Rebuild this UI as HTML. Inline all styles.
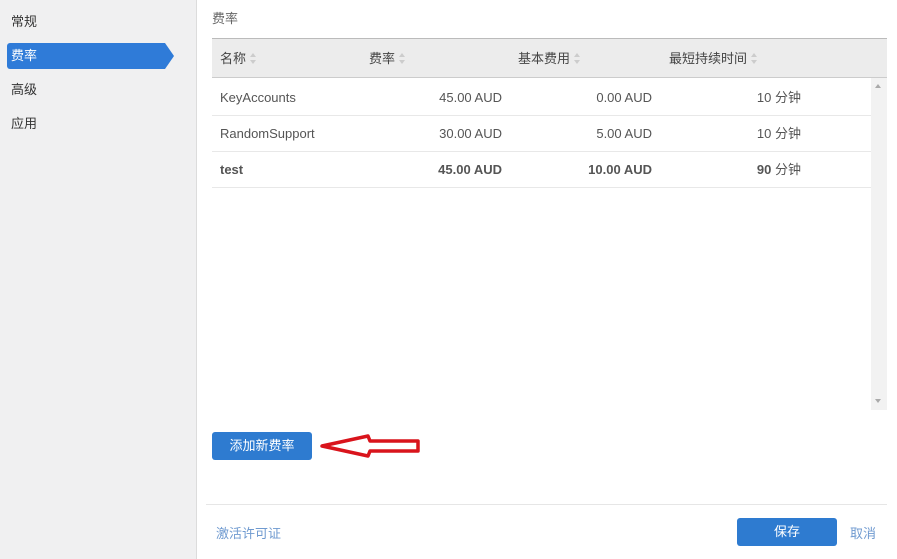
<!DOCTYPE html>
<html><head><meta charset="utf-8"><style>
*{margin:0;padding:0;box-sizing:border-box}
body{width:897px;height:559px;overflow:hidden;background:#fff;font-family:"Liberation Sans","Noto Sans CJK SC",sans-serif;font-size:13px;line-height:16px;color:#555;position:relative}
.side{position:absolute;left:0;top:0;width:197px;height:559px;background:#f0f0f1;border-right:1px solid #dcdcdc}
.nav{position:absolute;left:11px;font-size:13px;color:#333}
.act{position:absolute;left:7px;top:43px;width:158px;height:26px;background:#2f7bd8;border-radius:3px 0 0 3px;color:#fff;padding:5px 0 0 4px}
.act:after{content:"";position:absolute;right:-9px;top:0;border-left:9px solid #2f7bd8;border-top:13px solid transparent;border-bottom:13px solid transparent}
.abs{position:absolute}
.hdr{left:212px;top:38px;width:675px;height:40px;background:#ececec;border-top:1px solid #bbb;border-bottom:1px solid #ccc}
.hdr>div{position:absolute;top:12px;color:#444;display:flex;align-items:center}
.s{display:inline-block;margin-left:4px;width:6px;height:12px;position:relative}
.s:before{content:"";position:absolute;left:0;top:0;border-left:3px solid transparent;border-right:3px solid transparent;border-bottom:4px solid #ccc}
.s:after{content:"";position:absolute;left:0;top:7px;border-left:3px solid transparent;border-right:3px solid transparent;border-top:4px solid #ccc}
.row{left:212px;width:659px;border-bottom:1px solid #e8e8e8;height:36px}
.row>div{position:absolute;top:10px;color:#555}
.btn{background:#2e7bd0;color:#fff;border-radius:3px;display:flex;align-items:center;justify-content:center;font-size:13px}
</style></head><body>
<div class="side">
<div class="nav" style="top:14px">常规</div>
<div class="act">费率</div>
<div class="nav" style="top:82px">高级</div>
<div class="nav" style="top:116px">应用</div>
</div>
<div class="abs" style="left:212px;top:11px;color:#666">费率</div>
<div class="abs hdr">
<div style="left:8px">名称<span class="s"></span></div>
<div style="left:157px">费率<span class="s"></span></div>
<div style="left:306px">基本费用<span class="s"></span></div>
<div style="left:457px">最短持续时间<span class="s"></span></div>
</div>
<div class="abs" style="left:871px;top:78px;width:16px;height:332px;background:#f2f2f2"></div>
<div class="abs" style="left:875px;top:84px;border-left:3px solid transparent;border-right:3px solid transparent;border-bottom:4px solid #aaa"></div>
<div class="abs" style="left:875px;top:399px;border-left:3px solid transparent;border-right:3px solid transparent;border-top:4px solid #aaa"></div>
<div class="abs row" style="top:80px"><div style="left:8px">KeyAccounts</div><div style="right:369px">45.00 AUD</div><div style="right:219px">0.00 AUD</div><div style="right:70px">10 分钟</div></div>
<div class="abs row" style="top:116px"><div style="left:8px">RandomSupport</div><div style="right:369px">30.00 AUD</div><div style="right:219px">5.00 AUD</div><div style="right:70px">10 分钟</div></div>
<div class="abs row" style="top:152px"><div style="left:8px;font-weight:bold">test</div><div style="right:369px;font-weight:bold">45.00 AUD</div><div style="right:219px;font-weight:bold">10.00 AUD</div><div style="right:70px"><b>90</b> 分钟</div></div>
<div class="abs btn" style="left:212px;top:432px;width:100px;height:28px">添加新费率</div>
<svg class="abs" style="left:318px;top:432px" width="106" height="28"><path d="M4 14 L50 4 L52 9 L100 9 L100 19 L52 19 L50 24 Z" fill="none" stroke="#d9141c" stroke-width="3.5" stroke-linejoin="round"/></svg>
<div class="abs" style="left:206px;top:504px;width:681px;height:1px;background:#e6e6e6"></div>
<div class="abs" style="left:216px;top:526px;color:#6f9ad0">激活许可证</div>
<div class="abs btn" style="left:737px;top:518px;width:100px;height:28px">保存</div>
<div class="abs" style="left:850px;top:526px;color:#6f9ad0">取消</div>
</body></html>
